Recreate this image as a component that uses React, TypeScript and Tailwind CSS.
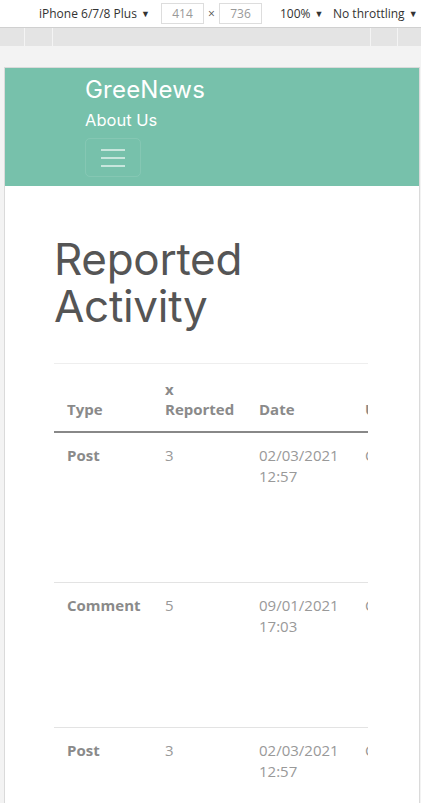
import React from "react";

const rows = [
  { type: "Post", count: "3", date: "02/03/2021", time: "12:57", h: "h-[150px]" },
  { type: "Comment", count: "5", date: "09/01/2021", time: "17:03", h: "h-[145px]" },
  { type: "Post", count: "3", date: "02/03/2021", time: "12:57", h: "h-[145px]" },
];

const Caret = () => <span className="ml-[4px] text-[9px] align-[1px]">▼</span>;

const DevToolbar = () => (
  <div className="h-[28px] bg-white border-b border-[#d0d0d0] flex items-center text-[12px] text-[#333] font-['Open_Sans',sans-serif]">
    <span className="ml-[39px] w-[116px]">iPhone 6/7/8 Plus<Caret /></span>
    <span className="ml-[6px] w-[43px] h-[21px] border border-[#ddd] text-[#999] flex items-center justify-center">414</span>
    <span className="w-[15px] text-center text-[#555]">×</span>
    <span className="w-[43px] h-[21px] border border-[#ddd] text-[#999] flex items-center justify-center">736</span>
    <span className="ml-[18px] w-[53px]">100%<Caret /></span>
    <span>No throttling<Caret /></span>
  </div>
);

const Ruler = () => (
  <div className="h-[18px] bg-[#e4e4e4] flex">
    <div className="w-[25px] border-r border-[#f4f4f4]" />
    <div className="w-[28px] border-r border-[#f4f4f4]" />
    <div className="w-[318px] border-r border-[#f4f4f4]" />
    <div className="w-[27px] border-r border-[#f4f4f4]" />
  </div>
);

const NavBar = () => (
  <header className="bg-[#77c1ab] pl-[80px] pt-[7px] pb-[9px] flex flex-col items-start font-['Inter',sans-serif] text-white">
    <a className="text-[24px] leading-[30px] tracking-[0.2px]">GreeNews</a>
    <a className="mt-[4px] text-[16.5px] leading-[22px]">About Us</a>
    <button className="mt-[7px] w-[56px] h-[39px] rounded-[5px] border border-white/10 flex flex-col items-center justify-center gap-[6px]">
      <span className="block w-[24px] h-[2px] bg-white/60" />
      <span className="block w-[24px] h-[2px] bg-white/60" />
      <span className="block w-[24px] h-[2px] bg-white/60" />
    </button>
  </header>
);

const ReportTable = () => (
  <div className="mt-[33px] w-[314px] overflow-hidden font-['Open_Sans',sans-serif] text-[15px]">
    <table className="w-[520px] border-collapse text-left">
      <thead>
        <tr className="border-t border-[#eee] border-b-2 border-b-[#888] text-[#8a8a8a] font-bold align-bottom">
          <th className="w-[98px] pl-[13px] pt-[15px] pb-[12px] leading-[20px]">Type</th>
          <th className="w-[94px] pl-[13px] pt-[15px] pb-[12px] leading-[20px]">x<br />Reported</th>
          <th className="w-[106px] pl-[13px] pt-[15px] pb-[12px] leading-[20px]">Date</th>
          <th className="pl-[13px] pt-[15px] pb-[12px] leading-[20px]">User</th>
        </tr>
      </thead>
      <tbody>
        {rows.map((r, i) => (
          <tr key={i} className={`${r.h} align-top border-b border-[#e3e3e3] text-[#999]`}>
            <td className="pl-[13px] pt-[12px] leading-[21px] font-bold text-[#8a8a8a]">{r.type}</td>
            <td className="pl-[13px] pt-[12px] leading-[21px]">{r.count}</td>
            <td className="pl-[13px] pt-[12px] leading-[21px]">
              {r.date}
              <br />
              {r.time}
            </td>
            <td className="pl-[13px] pt-[12px] leading-[21px]">Content</td>
          </tr>
        ))}
      </tbody>
    </table>
  </div>
);

export default function App() {
  return (
    <div className="w-[421px] h-[803px] bg-[#f3f3f3] overflow-hidden flex flex-col">
      <DevToolbar />
      <Ruler />
      <div className="mt-[21px] ml-[4px] w-[416px] flex-1 border-x border-t border-[#dadada] bg-white flex flex-col overflow-hidden">
        <NavBar />
        <main className="pl-[49px] pt-[50px]">
          <h1 className="font-['Inter',sans-serif] text-[44px] leading-[47px] text-[#555] font-normal tracking-[-0.3px]">
            Reported
            <br />
            Activity
          </h1>
          <ReportTable />
        </main>
      </div>
    </div>
  );
}
